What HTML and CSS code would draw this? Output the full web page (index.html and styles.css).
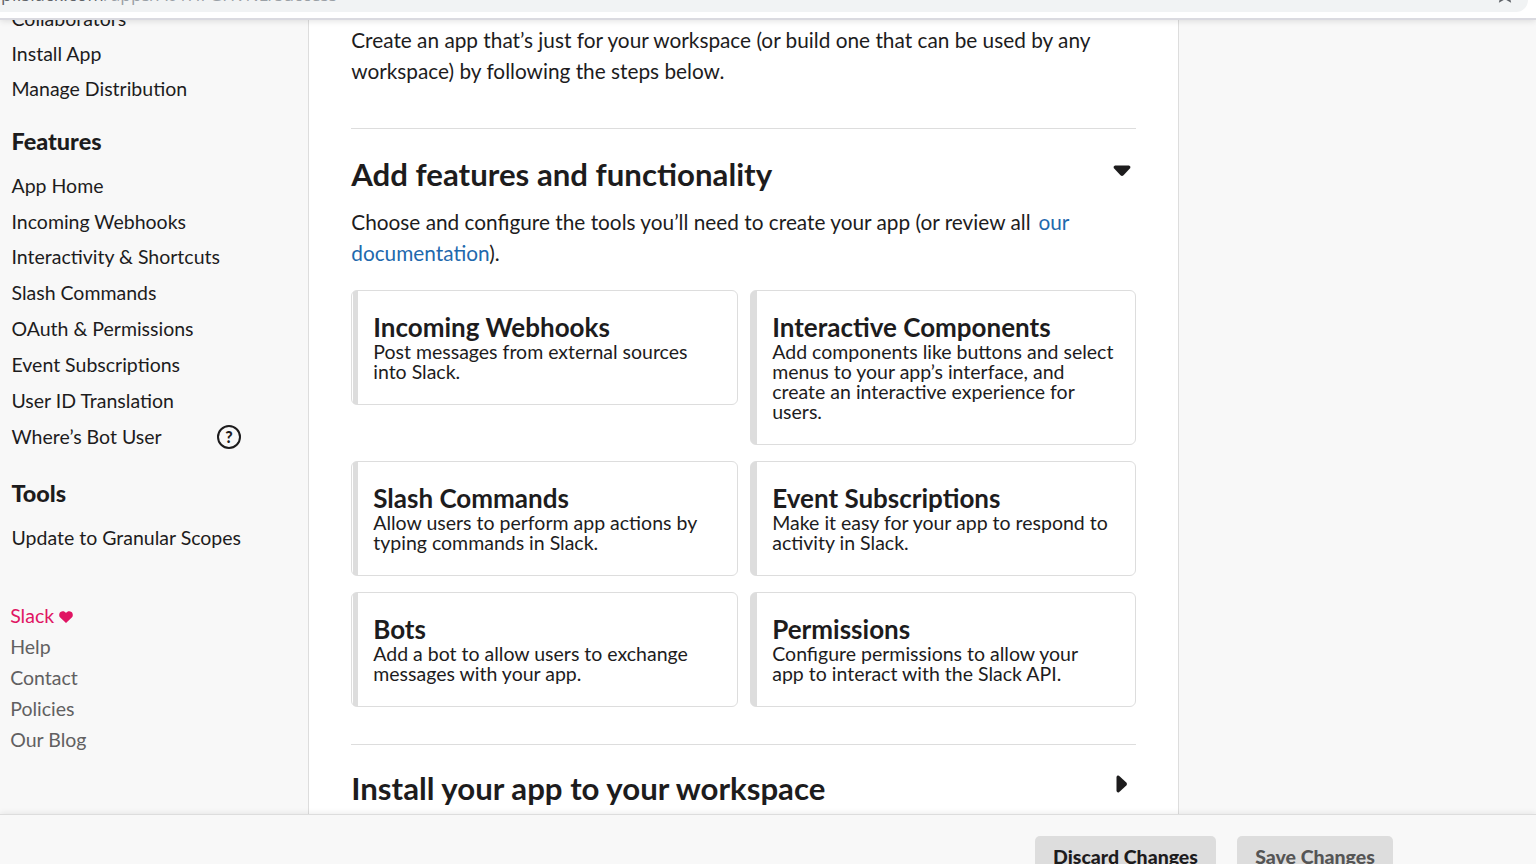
FILE: index.html
```
<!DOCTYPE html>
<html lang="en">
<head>
<meta charset="utf-8">
<title>Basic Information</title>
<link rel="stylesheet" href="styles.css">
</head>
<body>
<header class="browser-bar">
  <div class="omnibox"><span class="url"><span class="url-host">pi.slack.com</span>/apps/A01HFGHVNE/success</span>
  <svg class="star" width="18" height="18" viewBox="0 0 18 18"><path d="M9 1.500l2.200 5 5.500.5-4.200 3.600 1.300 5.400L9 13.200l-4.800 2.800 1.300-5.400L1.300 7l5.500-.5z" fill="none" stroke="#5f6368" stroke-width="1.800"/></svg></div>
</header>
<div class="page">
  <aside class="sidebar">
    <nav class="nav settings">
      <a>Collaborators</a>
      <a>Install App</a>
      <a>Manage Distribution</a>
    </nav>
    <h3 class="nav-title features">Features</h3>
    <nav class="nav">
      <a>App Home</a>
      <a>Incoming Webhooks</a>
      <a>Interactivity &amp; Shortcuts</a>
      <a>Slash Commands</a>
      <a>OAuth &amp; Permissions</a>
      <a>Event Subscriptions</a>
      <a>User ID Translation</a>
      <a class="with-help">Where’s Bot User <span class="help">?</span></a>
    </nav>
    <h3 class="nav-title tools">Tools</h3>
    <nav class="nav">
      <a>Update to Granular Scopes</a>
    </nav>
    <nav class="links">
      <a class="brand">Slack <svg class="heart" width="14" height="12" viewBox="0 0 14 12"><path d="M7 12L1.200 6.600C-.4 5 0 2.200 1.500 1 3.300-.4 5.800.2 7 2 8.200.2 10.700-.4 12.500 1c1.500 1.200 1.900 4 .3 5.600z" fill="#e01563"/></svg></a>
      <a>Help</a>
      <a>Contact</a>
      <a>Policies</a>
      <a>Our Blog</a>
    </nav>
  </aside>
  <main class="content">
    <p class="lead intro">Create an app that’s just for your workspace (or build one that can be used by any workspace) by following the steps below.</p>
    <section class="step first-step">
      <div class="step-head"><h2>Add features and functionality</h2>
        <svg class="caret-down" width="18" height="12" viewBox="0 0 18 12"><path d="M2 .5h14q2 .5 1.300 2.500L10.500 10.300q-1.500 1.500-3 0L.7 3Q0 1 2 .5z" fill="#1d1c1d"/></svg></div>
      <p class="lead choose">Choose and configure the tools you’ll need to create your app (or review all <a class="doc first">our</a> <a class="doc">documentation</a>).</p>
      <div class="cards">
        <article class="card gap"><h4>Incoming Webhooks</h4><p>Post messages from external sources into Slack.</p></article>
        <article class="card"><h4>Interactive Components</h4><p>Add components like buttons and select menus to your app’s interface, and create an interactive experience for users.</p></article>
        <article class="card gap"><h4>Slash Commands</h4><p>Allow users to perform app actions by typing commands in Slack.</p></article>
        <article class="card"><h4>Event Subscriptions</h4><p>Make it easy for your app to respond to activity in Slack.</p></article>
        <article class="card gap"><h4>Bots</h4><p>Add a bot to allow users to exchange messages with your app.</p></article>
        <article class="card"><h4>Permissions</h4><p>Configure permissions to allow your app&nbsp;to interact with the Slack API.</p></article>
      </div>
    </section>
    <section class="step install">
      <div class="step-head"><h2>Install your app to your workspace</h2>
        <svg class="caret-right" width="12" height="18" viewBox="0 0 12 18"><path d="M.5 2v14q.5 2 2.500 1.300L10.300 10.500q1.500-1.500 0-3L3 .7Q1 0 .5 2z" fill="#1d1c1d"/></svg></div>
    </section>
  </main>
</div>
<footer class="actions">
  <button class="btn">Discard Changes</button>
  <button class="btn muted">Save Changes</button>
</footer>
</body>
</html>
```

FILE: styles.css
```
* { box-sizing: border-box; }
body { margin: 0; width: 1536px; height: 864px; overflow: hidden; display: flex; flex-direction: column; background: #f8f8f8; color: #1d1c1d; font-family: Lato, Carlito, sans-serif; }
h2, h3, h4, p { margin: 0; }
.browser-bar { height: 20px; flex: none; background: #fff; border-bottom: 2px solid #dadae0; box-shadow: 0 1px 6px rgba(0,0,0,.12); position: relative; z-index: 2; }
.omnibox { height: 12px; margin-right: 8px; background: #f1f3f4; border-radius: 0 0 18px 0; display: flex; justify-content: space-between; align-items: flex-end; padding: 0 14px 8px 0; }
.url { font: 17.500px/20px "Open Sans", sans-serif; color: #9aa0a6; flex: none; margin-left: 1px; }
.url-host { color: #5f6368; letter-spacing: .3px; }
.star { flex: none; margin-bottom: 1px; }
.page { flex: 1; min-height: 0; display: flex; overflow: hidden; }
.sidebar { width: 308px; flex: none; padding-left: 11.500px; margin-top: -19px; }
.nav { display: flex; flex-direction: column; font-size: 19.500px; line-height: 35.850px; }
.settings { line-height: 35px; }
.nav-title { font-size: 23.400px; font-weight: 900; line-height: 30px; }
.features { margin: 20px 0 11.700px; }
.tools { margin: 23.300px 0 12px; }
.with-help { display: flex; align-items: center; justify-content: space-between; width: 229.500px; }
.help { width: 24px; height: 24px; border: 2px solid #1d1c1d; border-radius: 50%; font-size: 16px; font-weight: 900; line-height: 20px; text-align: center; }
.links { margin: 44px 0 0 -1.300px; display: flex; flex-direction: column; font-size: 19.500px; line-height: 31px; color: #616061; }
.brand { color: #e01563; }
.heart { vertical-align: 0; }
.content { width: 871px; flex: none; background: #fff; border: solid #ddd; border-width: 0 1px; padding: 4px 42px 0; overflow: hidden; }
.lead { font-size: 20.800px; line-height: 31px; padding-left: .25px; }
.doc { color: #1f69ad; }
.first { margin-left: 2.500px; }
.step { margin-top: 42px; border-top: 1px solid #ddd; padding-top: 23px; }
.step-head { display: flex; justify-content: space-between; align-items: center; padding: 0 5.300px 0 .25px; height: 44px; }
.step-head h2 { font-size: 31.200px; font-weight: 700; line-height: 44px; }
.caret-down { margin-bottom: 6px; }
.caret-right { margin: 0 3px 9px 0; }
.choose { margin: 10px 0 22px; }
.cards { display: grid; grid-template-columns: 387px 386px; column-gap: 12px; row-gap: 16px; align-items: start; }
.card { border: 1px solid #ddd; border-radius: 6px; padding: 22px 20px 22px 21.250px; background: linear-gradient(90deg, #ddd 6px, transparent 6px); }
.gap { background: linear-gradient(90deg, #fff 1px, #ddd 1px, #ddd 6px, transparent 6px); }
.card h4 { font-size: 26px; font-weight: 700; line-height: 29px; }
.card p { font-size: 19.500px; line-height: 20px; }
.install { margin-top: 37px; padding-top: 21px; }
.actions { height: 50px; flex: none; background: #f8f8f8; border-top: 1px solid #ddd; box-shadow: 0 -1px 6px rgba(0,0,0,.08); position: relative; z-index: 2; display: flex; align-items: flex-start; gap: 21px; padding: 21px 0 0 1035px; overflow: hidden; }
.btn { flex: none; width: 181px; height: 42px; border: 0; border-radius: 5px; background: #ddd; color: #1d1c1d; font: 900 19.500px/42px Lato, Carlito, sans-serif; padding: 0; }
.muted { width: 156px; color: #555; }
```
